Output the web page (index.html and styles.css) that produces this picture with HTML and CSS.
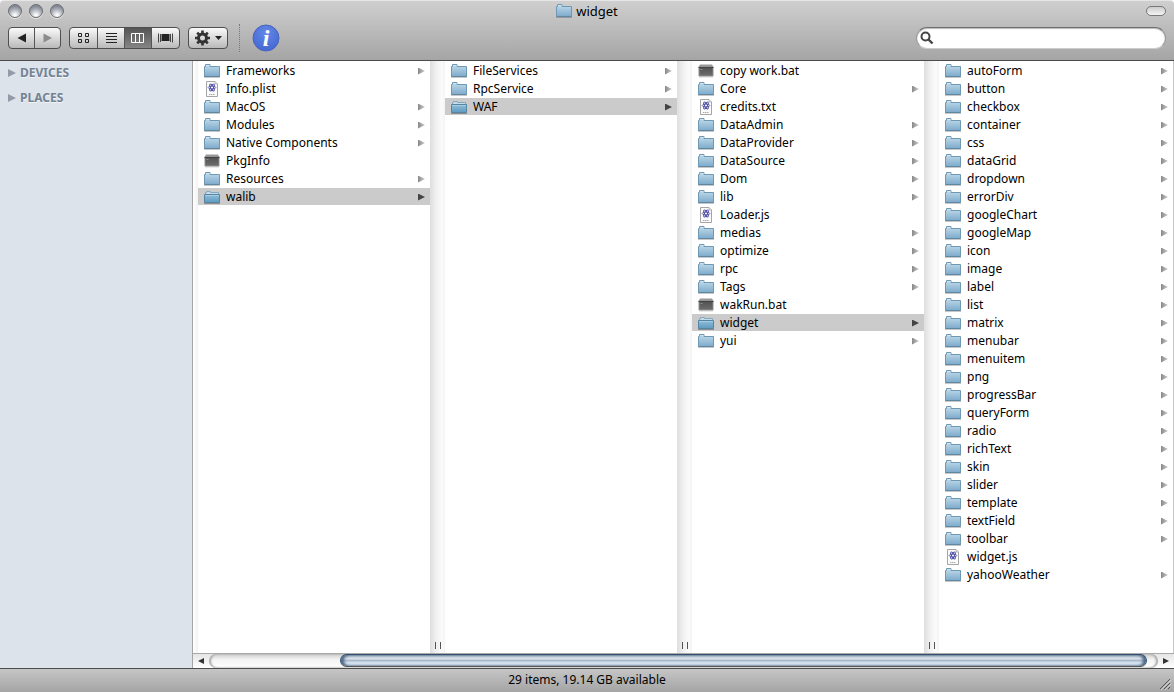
FILE: index.html
```html
<!DOCTYPE html>
<html lang="en">
<head>
<meta charset="utf-8">
<title>widget</title>
<link rel="stylesheet" href="styles.css">
</head>
<body>
<svg class="defs" aria-hidden="true">
  <defs>
    <linearGradient id="gf" x1="0" y1="0" x2="0" y2="1"><stop offset="0" stop-color="#c2dcec"/><stop offset="1" stop-color="#7daaca"/></linearGradient>
    <linearGradient id="go" x1="0" y1="0" x2="0" y2="1"><stop offset="0" stop-color="#91bfda"/><stop offset="1" stop-color="#5e9ac0"/></linearGradient>
    <linearGradient id="ge" x1="0" y1="0" x2="0" y2="1"><stop offset="0" stop-color="#505050"/><stop offset="1" stop-color="#6e6e6e"/></linearGradient>
    <radialGradient id="gi" cx=".5" cy=".3" r=".7"><stop offset="0" stop-color="#6388e6"/><stop offset="1" stop-color="#4468d4"/></radialGradient>
  </defs>
  <symbol id="folder" viewBox="0 0 16 16">
    <path d="M0 14h16v1H0z" fill="#000" opacity=".22"/>
    <path d="M.5 13.500V3.500h1v-2h4.500v2h9.500v10z" fill="url(#gf)" stroke="#6f98b5"/>
    <path d="M.5 13.500h15" stroke="#5f88a4"/>
    <path d="M2 2.500h3.500" stroke="#d0e4f0"/>
  </symbol>
  <symbol id="open" viewBox="0 0 16 16">
    <path d="M0 14h16v1H0z" fill="#000" opacity=".3"/>
    <path d="M1.500 6V3.500h1v-1h4v1h8V6z" fill="#c4dbe8" stroke="#86a9c0"/>
    <path d="M.5 5.500h15v8H.5z" fill="url(#go)" stroke="#5585a5"/>
    <path d="M1 6.500h14" stroke="#b4d5e6" opacity=".7"/>
  </symbol>
  <symbol id="doc" viewBox="0 0 16 16">
    <path d="M2.500 .5h8.500l2.500 2.500v12.500h-11z" fill="#fbfbfb" stroke="#a5a5a5"/>
    <path d="M11 .5V3h2.500" fill="#ddd" stroke="#aaa" stroke-width=".7"/>
    <g fill="none" stroke="#4d4da6" stroke-width=".9"><ellipse cx="8" cy="6.500" rx="3.800" ry="1.500"/><ellipse cx="8" cy="6.500" rx="3.800" ry="1.500" transform="rotate(60 8 6.500)"/><ellipse cx="8" cy="6.500" rx="3.800" ry="1.500" transform="rotate(120 8 6.500)"/></g>
    <path d="M5 13.500h6" stroke="#aaa" stroke-dasharray="1.500 .5"/>
  </symbol>
  <symbol id="exec" viewBox="0 0 16 16">
    <path d="M2 1.500h12L15.500 4H.5z" fill="#999"/>
    <path d="M1 4h14v9H1z" fill="url(#ge)" stroke="#8d8d8d"/>
    <path d="M.5 4.500h15" stroke="#444"/><path d="M2.500 6.500h2" stroke="#78a078"/>
    <path d="M1 14h14" stroke="#aaa" opacity=".5"/>
  </symbol>
</svg>

<div class="window">
  <header class="header">
    <div class="titlebar">
      <div class="lights">
        <button class="light" aria-label="Close"></button>
        <button class="light" aria-label="Minimize"></button>
        <button class="light" aria-label="Zoom"></button>
      </div>
      <h1 class="title"><svg class="icon" aria-hidden="true"><use href="#folder"/></svg>widget</h1>
      <button class="pill" aria-label="Toggle toolbar"></button>
    </div>
    <div class="toolbar">
      <div class="group">
        <button class="seg" aria-label="Back"><svg width="25" height="20"><path d="M17 5.500v9L8.500 10z" fill="#222"/></svg></button>
        <button class="seg" aria-label="Forward"><svg width="25" height="20"><path d="M8.500 5.500v9L17 10z" fill="#8c8c8c"/></svg></button>
      </div>
      <div class="group">
        <button class="seg" aria-label="Icon view"><svg width="27" height="20"><path d="M8.500 5.500h3v3h-3zM15.500 5.500h3v3h-3zM8.500 11.500h3v3h-3zM15.500 11.500h3v3h-3z" fill="none" stroke="#222"/></svg></button>
        <button class="seg" aria-label="List view"><svg width="26" height="20"><path d="M8 5.500h11M8 8.500h11M8 11.500h11M8 14.500h11" stroke="#222"/></svg></button>
        <button class="seg on" aria-label="Column view"><svg width="26" height="20"><path d="M6.500 5.500h12v9h-12zM10.500 5v9.500M14.500 5v9.500" fill="none" stroke="#fff"/></svg></button>
        <button class="seg" aria-label="Cover flow"><svg width="27" height="20"><path d="M9.500 6h8v7h-8z" fill="#222"/><path d="M6.500 5.500v9M8.500 6v8M18.500 6v8M20.500 5.500v9" stroke="#444"/></svg></button>
      </div>
      <div class="group">
        <button class="seg" aria-label="Action"><svg width="38" height="20"><circle cx="13.500" cy="10" r="4" fill="none" stroke="#333" stroke-width="3"/><g stroke="#333" stroke-width="2.600"><path d="M13.500 2.500v3M13.500 14.500v3M6 10h3M18 10h3"/><path d="M8.200 4.700l2.300 2.300M16.500 13l2.300 2.300M8.200 15.300l2.300-2.300M16.500 7l2.300-2.300"/></g><path d="M26 8h7l-3.500 4z" fill="#222"/></svg></button>
      </div>
      <span class="divider"></span>
      <button class="info" aria-label="Get info"><svg width="28" height="28"><circle cx="14" cy="14" r="13" fill="url(#gi)" stroke="#4a64bb"/><text class="info-i" x="14" y="22" text-anchor="middle">i</text></svg></button>
      <div class="search">
        <label for="q"><svg width="14" height="14"><circle cx="5.500" cy="5.500" r="4" fill="none" stroke="#444" stroke-width="2"/><path d="M8.500 8.500l4 4" stroke="#444" stroke-width="2.400"/></svg></label>
        <input id="q" type="text" aria-label="Search">
      </div>
    </div>
  </header>

  <div class="main">
    <nav class="sidebar">
      <button class="section">DEVICES</button>
      <button class="section">PLACES</button>
    </nav>
    <div class="browser">
      <div class="columns">
        <span class="edge"></span>
        <div class="col">
          <a href="#" class="row dir"><svg class="icon"><use href="#folder"/></svg>Frameworks</a>
          <a href="#" class="row"><svg class="icon"><use href="#doc"/></svg>Info.plist</a>
          <a href="#" class="row dir"><svg class="icon"><use href="#folder"/></svg>MacOS</a>
          <a href="#" class="row dir"><svg class="icon"><use href="#folder"/></svg>Modules</a>
          <a href="#" class="row dir"><svg class="icon"><use href="#folder"/></svg>Native Components</a>
          <a href="#" class="row"><svg class="icon"><use href="#exec"/></svg>PkgInfo</a>
          <a href="#" class="row dir"><svg class="icon"><use href="#folder"/></svg>Resources</a>
          <a href="#" class="row dir current"><svg class="icon"><use href="#open"/></svg>walib</a>
        </div>
        <span class="gutter"></span>
        <div class="col">
          <a href="#" class="row dir"><svg class="icon"><use href="#folder"/></svg>FileServices</a>
          <a href="#" class="row dir"><svg class="icon"><use href="#folder"/></svg>RpcService</a>
          <a href="#" class="row dir current"><svg class="icon"><use href="#open"/></svg>WAF</a>
        </div>
        <span class="gutter"></span>
        <div class="col">
          <a href="#" class="row"><svg class="icon"><use href="#exec"/></svg>copy work.bat</a>
          <a href="#" class="row dir"><svg class="icon"><use href="#folder"/></svg>Core</a>
          <a href="#" class="row"><svg class="icon"><use href="#doc"/></svg>credits.txt</a>
          <a href="#" class="row dir"><svg class="icon"><use href="#folder"/></svg>DataAdmin</a>
          <a href="#" class="row dir"><svg class="icon"><use href="#folder"/></svg>DataProvider</a>
          <a href="#" class="row dir"><svg class="icon"><use href="#folder"/></svg>DataSource</a>
          <a href="#" class="row dir"><svg class="icon"><use href="#folder"/></svg>Dom</a>
          <a href="#" class="row dir"><svg class="icon"><use href="#folder"/></svg>lib</a>
          <a href="#" class="row"><svg class="icon"><use href="#doc"/></svg>Loader.js</a>
          <a href="#" class="row dir"><svg class="icon"><use href="#folder"/></svg>medias</a>
          <a href="#" class="row dir"><svg class="icon"><use href="#folder"/></svg>optimize</a>
          <a href="#" class="row dir"><svg class="icon"><use href="#folder"/></svg>rpc</a>
          <a href="#" class="row dir"><svg class="icon"><use href="#folder"/></svg>Tags</a>
          <a href="#" class="row"><svg class="icon"><use href="#exec"/></svg>wakRun.bat</a>
          <a href="#" class="row dir current"><svg class="icon"><use href="#open"/></svg>widget</a>
          <a href="#" class="row dir"><svg class="icon"><use href="#folder"/></svg>yui</a>
        </div>
        <span class="gutter"></span>
        <div class="col">
          <a href="#" class="row dir"><svg class="icon"><use href="#folder"/></svg>autoForm</a>
          <a href="#" class="row dir"><svg class="icon"><use href="#folder"/></svg>button</a>
          <a href="#" class="row dir"><svg class="icon"><use href="#folder"/></svg>checkbox</a>
          <a href="#" class="row dir"><svg class="icon"><use href="#folder"/></svg>container</a>
          <a href="#" class="row dir"><svg class="icon"><use href="#folder"/></svg>css</a>
          <a href="#" class="row dir"><svg class="icon"><use href="#folder"/></svg>dataGrid</a>
          <a href="#" class="row dir"><svg class="icon"><use href="#folder"/></svg>dropdown</a>
          <a href="#" class="row dir"><svg class="icon"><use href="#folder"/></svg>errorDiv</a>
          <a href="#" class="row dir"><svg class="icon"><use href="#folder"/></svg>googleChart</a>
          <a href="#" class="row dir"><svg class="icon"><use href="#folder"/></svg>googleMap</a>
          <a href="#" class="row dir"><svg class="icon"><use href="#folder"/></svg>icon</a>
          <a href="#" class="row dir"><svg class="icon"><use href="#folder"/></svg>image</a>
          <a href="#" class="row dir"><svg class="icon"><use href="#folder"/></svg>label</a>
          <a href="#" class="row dir"><svg class="icon"><use href="#folder"/></svg>list</a>
          <a href="#" class="row dir"><svg class="icon"><use href="#folder"/></svg>matrix</a>
          <a href="#" class="row dir"><svg class="icon"><use href="#folder"/></svg>menubar</a>
          <a href="#" class="row dir"><svg class="icon"><use href="#folder"/></svg>menuitem</a>
          <a href="#" class="row dir"><svg class="icon"><use href="#folder"/></svg>png</a>
          <a href="#" class="row dir"><svg class="icon"><use href="#folder"/></svg>progressBar</a>
          <a href="#" class="row dir"><svg class="icon"><use href="#folder"/></svg>queryForm</a>
          <a href="#" class="row dir"><svg class="icon"><use href="#folder"/></svg>radio</a>
          <a href="#" class="row dir"><svg class="icon"><use href="#folder"/></svg>richText</a>
          <a href="#" class="row dir"><svg class="icon"><use href="#folder"/></svg>skin</a>
          <a href="#" class="row dir"><svg class="icon"><use href="#folder"/></svg>slider</a>
          <a href="#" class="row dir"><svg class="icon"><use href="#folder"/></svg>template</a>
          <a href="#" class="row dir"><svg class="icon"><use href="#folder"/></svg>textField</a>
          <a href="#" class="row dir"><svg class="icon"><use href="#folder"/></svg>toolbar</a>
          <a href="#" class="row"><svg class="icon"><use href="#doc"/></svg>widget.js</a>
          <a href="#" class="row dir"><svg class="icon"><use href="#folder"/></svg>yahooWeather</a>
        </div>
      </div>
      <div class="scrollbar">
        <button class="step" aria-label="Scroll left"><svg width="16" height="14"><path d="M11 4v6L5 7z" fill="#333"/></svg></button>
        <div class="track"><div class="thumb"></div></div>
        <button class="step" aria-label="Scroll right"><svg width="16" height="14"><path d="M5 4v6l6-3z" fill="#333"/></svg></button>
      </div>
    </div>
  </div>

  <footer class="status">
    <span class="status-text">29 items, 19.14 GB available</span>
    <svg class="grip" width="12" height="12" aria-hidden="true"><path d="M1 11L11 1M5 11l6-6M9 11l2-2" stroke="#555"/><path d="M2 12L12 2M6 12l6-6" stroke="#ddd" opacity=".7"/></svg>
  </footer>
</div>
</body>
</html>
```
FILE: styles.css
```css
* { box-sizing: border-box; }
body {
  margin: 0;
  background: #fff;
  color: #000;
  font: 12px/18px "Lucida Grande", "Noto Sans", sans-serif;
}
button { margin: 0; padding: 0; border: 0; background: none; font: inherit; }
svg { display: block; flex: none; }
.defs { position: absolute; width: 0; height: 0; }
.window { display: flex; flex-direction: column; min-height: 100vh; }
.icon { width: 16px; height: 16px; }

.header {
  border-top: 1px solid #e6e6e6;
  border-bottom: 1px solid #4c4c4c;
  border-radius: 4px 4px 0 0;
  background: linear-gradient(#cfcfcf, #a5a5a5);
}
.titlebar {
  display: grid;
  grid-template-columns: 1fr auto 1fr;
  align-items: center;
  height: 20px;
  padding: 0 8px;
}
.lights { display: flex; gap: 7px; }
.light {
  width: 14px;
  height: 14px;
  border: 1px solid #6b6d72;
  border-radius: 50%;
  background: radial-gradient(circle at 50% 85%, #fff 5%, #b5b8c0 45%, #868a95 75%);
  box-shadow: 0 1px 0 #e8e8e8;
}
.title {
  display: flex;
  align-items: center;
  gap: 4px;
  margin: 0;
  font-size: 13px;
  font-weight: 400;
}
.pill {
  justify-self: end;
  width: 20px;
  height: 10px;
  border: 1px solid #777;
  border-radius: 5px;
  background: linear-gradient(#ccc, #f4f4f4);
}
.toolbar {
  display: flex;
  align-items: center;
  gap: 8px;
  padding: 3px 8px 8px;
}
.group {
  display: flex;
  overflow: hidden;
  border: 1px solid #4f4f4f;
  border-radius: 4px;
  background: linear-gradient(#fafafa, #b9b9b9);
}
.seg + .seg { border-left: 1px solid #555; }
.on { background: linear-gradient(#555, #858585); }
.divider { height: 28px; margin-left: 3px; border-left: 1px dotted #777; }
.info { margin-left: 4px; }
.info-i { fill: #fff; font: italic bold 24px "Liberation Serif", serif; }
.search {
  display: flex;
  align-items: center;
  gap: 4px;
  width: 250px;
  height: 22px;
  margin-left: auto;
  padding: 0 10px 0 3px;
  border: 1px solid #999;
  border-top-color: #6e6e6e;
  border-bottom-color: #ccc;
  border-radius: 11px;
  background: #fff;
  box-shadow: inset 0 1px 1px #bbb;
}
.search input { flex: 1; min-width: 0; border: 0; outline: 0; background: none; font: inherit; }

.main { display: flex; flex: 1; }
.sidebar {
  display: flex;
  flex-direction: column;
  gap: 7px;
  width: 193px;
  padding: 3px 8px;
  border-right: 1px solid #a5a5a5;
  background: #dde3eb;
}
.section {
  display: flex;
  align-items: center;
  gap: 4px;
  color: #748291;
  font-weight: 700;
  text-shadow: 0 1px 0 #f2f5f8;
}
.section::before {
  width: 8px;
  height: 8px;
  background: #929ca8;
  clip-path: polygon(0 0, 100% 50%, 0 100%);
  content: "";
}
.browser { display: flex; flex: 1; flex-direction: column; min-width: 0; }
.columns {
  display: grid;
  flex: 1;
  grid-template-columns: 5px 232px 15px 232px 15px 232px 15px 1fr;
  border-right: 1px solid #c8c8c8;
}
.edge { background: linear-gradient(90deg, #fff, #f2f2f2); }
.gutter {
  display: flex;
  align-items: flex-end;
  justify-content: center;
  padding-bottom: 4px;
  background: linear-gradient(90deg, #dedede, #f0f0f0 40%, #fbfbfb 80%, #f3f3f3);
}
.gutter::after {
  width: 4px;
  height: 7px;
  border: solid #555;
  border-width: 0 1px;
  content: "";
}
.col { padding-top: 1px; }
.row {
  display: flex;
  align-items: center;
  gap: 6px;
  height: 18px;
  padding: 0 5px 0 6px;
  color: #000;
  text-decoration: none;
  white-space: nowrap;
}
.dir::after {
  width: 7px;
  height: 7px;
  margin-left: auto;
  background: linear-gradient(90deg, #888, #ccc);
  clip-path: polygon(0 0, 100% 50%, 0 100%);
  content: "";
}
.current { background: linear-gradient(#cbcbcb 17px, #fff 17px); }
.current::after { background: #444; }

.scrollbar {
  display: flex;
  height: 15px;
  border-top: 1px solid #aaa;
  background: linear-gradient(#e5e5e5, #fff);
}
.track {
  flex: 1;
  border-radius: 7px;
  background: linear-gradient(#cfcfcf, #f4f4f4 40%, #fff);
  box-shadow: inset 2px 0 2px #aaa, inset -2px 0 2px #aaa;
}
.thumb {
  width: 85%;
  height: 13px;
  margin-left: 13.8%;
  border: 1px solid #34506f;
  border-bottom-color: #555;
  border-radius: 7px;
  background: linear-gradient(#c7d2dc, #d9e2ea 35%, #a9b9ca 50%, #d5e4f2 70%, #f2fbff);
  box-shadow: inset 3px 0 3px #4d6784, inset -3px 0 3px #4d6784;
}
.status {
  display: grid;
  grid-template-columns: 1fr auto 1fr;
  align-items: center;
  height: 24px;
  padding: 0 3px 2px;
  border-top: 1px solid #4c4c4c;
  background: linear-gradient(#c6c6c6, #a4a4a4);
}
.status-text { grid-column: 2; }
.grip { justify-self: end; align-self: end; }
```
